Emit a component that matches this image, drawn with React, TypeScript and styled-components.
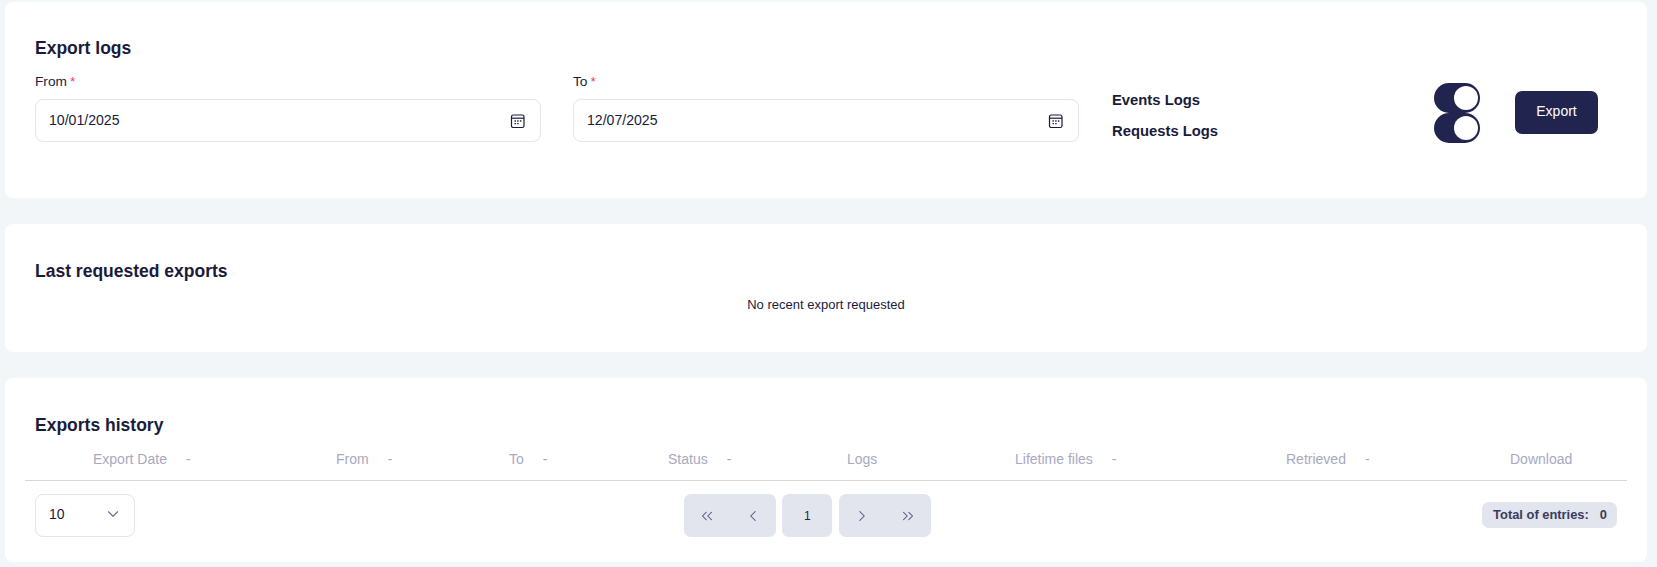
import React from 'react';
import styled, { createGlobalStyle } from 'styled-components';
import { ChevronDown, ChevronLeft, ChevronRight, ChevronsLeft, ChevronsRight } from 'lucide-react';

const GlobalStyle = createGlobalStyle`
  html, body {
    margin: 0;
    padding: 0;
    background: #f3f6f9;
    font-family: "Liberation Sans", Arial, sans-serif;
    color: #1a1b3c;
  }
  * {
    box-sizing: border-box;
  }
`;

const Page = styled.div`
  display: flex;
  flex-direction: column;
  gap: 26px;
  width: 1657px;
  height: 567px;
  padding: 2px 10px 5px 5px;
  overflow: hidden;
`;
const Card = styled.section<{ $height: number; $top: number }>`
  height: ${(p) => p.$height}px;
  padding: ${(p) => p.$top}px 30px 0;
  background: #fff;
  border-radius: 8px;
`;
const HistoryCard = styled(Card)`
  padding-left: 20px;
  padding-right: 20px;
`;
const Title = styled.h2`
  margin: 0;
  font-size: 17.5px;
  line-height: 20px;
  font-weight: 700;
  color: #1a1b3c;
`;
const HistoryTitle = styled(Title)`
  padding-left: 10px;
`;
const FormRow = styled.div`
  display: flex;
  align-items: flex-start;
  margin-top: 15px;
`;
const Field = styled.div`
  width: 505.5px;
  margin-right: 32.5px;
`;
const Label = styled.label`
  display: block;
  height: 26px;
  font-size: 13.7px;
  line-height: 18px;
  color: #1a1b3c;
`;
const Required = styled.span`
  margin-left: 3px;
  color: #f03d6a;
`;
const DateInput = styled.div`
  display: flex;
  align-items: center;
  justify-content: space-between;
  height: 43px;
  padding: 0 14px 0 13px;
  font-size: 14.1px;
  background: #fff;
  border: 1px solid #e2e4ef;
  border-radius: 8px;
`;
const DateValue = styled.span`
  margin-top: -2px;
`;
const LogNames = styled.div`
  display: flex;
  flex-direction: column;
  gap: 13px;
  width: 322px;
  margin: 18px 0 0 1px;
`;
const LogName = styled.div`
  font-size: 14.8px;
  line-height: 18px;
  font-weight: 700;
  color: #1a1b3c;
`;
const Toggles = styled.div`
  display: flex;
  flex-direction: column;
  width: 81px;
  margin-top: 10px;
`;
const Toggle = styled.div`
  display: flex;
  align-items: center;
  justify-content: flex-end;
  width: 45.5px;
  height: 30px;
  padding-right: 2px;
  background: #20244f;
  border-radius: 15px;
`;
const Knob = styled.span`
  width: 24px;
  height: 24px;
  background: #fff;
  border-radius: 50%;
`;
const ExportButton = styled.button`
  width: 83px;
  height: 43px;
  margin-top: 18px;
  padding: 0 0 4px;
  font-family: inherit;
  font-size: 14px;
  color: #fff;
  background: #20244f;
  border: 0;
  border-radius: 7px;
`;
const EmptyText = styled.div`
  margin-top: 15px;
  font-size: 13px;
  line-height: 18px;
  text-align: center;
  color: #1a1b3c;
`;
const HeadRow = styled.div`
  display: grid;
  grid-template-columns: 243px 173px 159px 179px 168px 271px 224px auto;
  align-items: center;
  height: 43px;
  margin-top: 3px;
  padding-left: 68px;
  border-bottom: 1px solid #d6d7dc;
`;
const HeadCell = styled.div`
  display: flex;
  gap: 19px;
  font-size: 14px;
  color: #a8a9c0;
`;
const Footer = styled.div`
  display: flex;
  align-items: center;
  justify-content: space-between;
  margin-top: 13px;
  padding: 0 10px;
`;
const PageSize = styled.div`
  display: flex;
  align-items: center;
  justify-content: space-between;
  width: 100px;
  height: 43px;
  padding: 0 12px 3px 13px;
  font-size: 14px;
  border: 1px solid #e2e4ef;
  border-radius: 8px;
`;
const Pager = styled.div`
  display: flex;
  gap: 6.5px;
  margin-right: 2px;
`;
const PagerGroup = styled.div<{ $width: number }>`
  display: flex;
  align-items: center;
  justify-content: space-around;
  width: ${(p) => p.$width}px;
  height: 43px;
  font-size: 12px;
  color: #20244f;
  background: #e2e4ee;
  border-radius: 7px;
`;
const Total = styled.div`
  display: flex;
  gap: 11px;
  align-items: center;
  height: 26px;
  margin-bottom: 2px;
  padding: 0 10px 0 11.5px;
  font-size: 12.9px;
  font-weight: 700;
  color: #3a3c5c;
  background: #e2e4ee;
  border-radius: 7px;
`;

const CalendarIcon = () => (
  <svg width="16" height="16" viewBox="0 0 16 16" fill="none">
    <rect x="1.5" y="2" width="12.5" height="12.5" rx="1.8" stroke="#1a1b3c" strokeWidth="1.2" />
    <path d="M1.5 5.2h12.5" stroke="#1a1b3c" strokeWidth="1.2" />
    <path d="M4.5 8h1.4M7.2 8h1.4M9.9 8h1.4M4.5 10.6h1.4M7.2 10.6h1.4" stroke="#1a1b3c" strokeWidth="1.3" />
  </svg>
);

const columns = [
  { name: 'Export Date', sortable: true },
  { name: 'From', sortable: true },
  { name: 'To', sortable: true },
  { name: 'Status', sortable: true },
  { name: 'Logs', sortable: false },
  { name: 'Lifetime files', sortable: true },
  { name: 'Retrieved', sortable: true },
  { name: 'Download', sortable: false },
];

const chevron = { size: 18, strokeWidth: 1.4, color: '#4c4f78' };

export default function App() {
  return (
    <>
      <GlobalStyle />
      <Page>
        <Card $height={196} $top={36}>
          <Title>Export logs</Title>
          <FormRow>
            <Field>
              <Label>
                From<Required>*</Required>
              </Label>
              <DateInput>
                <DateValue>10/01/2025</DateValue>
                <CalendarIcon />
              </DateInput>
            </Field>
            <Field>
              <Label>
                To<Required>*</Required>
              </Label>
              <DateInput>
                <DateValue>12/07/2025</DateValue>
                <CalendarIcon />
              </DateInput>
            </Field>
            <LogNames>
              <LogName>Events Logs</LogName>
              <LogName>Requests Logs</LogName>
            </LogNames>
            <Toggles>
              <Toggle>
                <Knob />
              </Toggle>
              <Toggle>
                <Knob />
              </Toggle>
            </Toggles>
            <ExportButton>Export</ExportButton>
          </FormRow>
        </Card>
        <Card $height={128} $top={37}>
          <Title>Last requested exports</Title>
          <EmptyText>No recent export requested</EmptyText>
        </Card>
        <HistoryCard $height={184} $top={37}>
          <HistoryTitle>Exports history</HistoryTitle>
          <HeadRow>
            {columns.map((column) => (
              <HeadCell key={column.name}>
                <span>{column.name}</span>
                {column.sortable && <span>-</span>}
              </HeadCell>
            ))}
          </HeadRow>
          <Footer>
            <PageSize>
              10
              <ChevronDown size={18} strokeWidth={1.5} color="#6e7088" />
            </PageSize>
            <Pager>
              <PagerGroup $width={92}>
                <ChevronsLeft {...chevron} />
                <ChevronLeft {...chevron} />
              </PagerGroup>
              <PagerGroup $width={50}>1</PagerGroup>
              <PagerGroup $width={92}>
                <ChevronRight {...chevron} />
                <ChevronsRight {...chevron} />
              </PagerGroup>
            </Pager>
            <Total>
              <span>Total of entries:</span>
              <span>0</span>
            </Total>
          </Footer>
        </HistoryCard>
      </Page>
    </>
  );
}
